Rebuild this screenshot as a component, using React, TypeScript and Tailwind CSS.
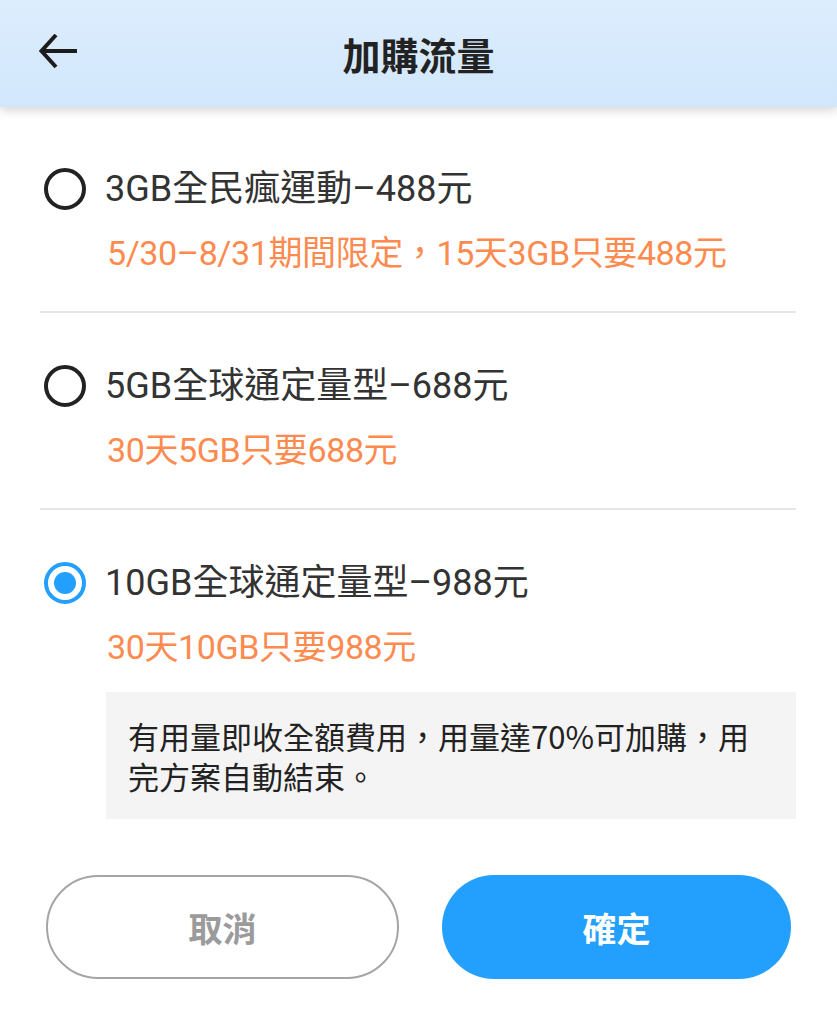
import { useState } from "react";

const plans = [
  { id: "3g", title: "3GB全民瘋運動–488元", desc: "5/30–8/31期間限定，15天3GB只要488元" },
  { id: "5g", title: "5GB全球通定量型–688元", desc: "30天5GB只要688元" },
  { id: "10g", title: "10GB全球通定量型–988元", desc: "30天10GB只要988元" },
];

const latin = "font-['Roboto','Noto_Sans_CJK_TC',sans-serif]";
const cjk = "font-['Noto_Sans_CJK_TC','Noto_Sans',sans-serif]";

function Radio({ checked }: { checked: boolean }) {
  return (
    <span
      className={`w-[42px] h-[42px] rounded-full border-[4px] flex items-center justify-center shrink-0 ${
        checked ? "border-[#239ffe]" : "border-[#222]"
      }`}
    >
      {checked && <span className="w-[22px] h-[22px] rounded-full bg-[#239ffe]" />}
    </span>
  );
}

export default function App() {
  const [selected, setSelected] = useState("10g");

  return (
    <div className={`w-[837px] h-[1024px] bg-white ${cjk}`}>
      {/* Header */}
      <div className="h-[107px] bg-gradient-to-b from-[#dcedfd] to-[#d2e7fc] shadow-[0_3px_10px_rgba(0,0,0,0.18)] grid grid-cols-[1fr_auto_1fr] items-center px-[38px] relative z-10">
        <button className="w-[40px] h-[40px] flex items-center">
          <svg width="40" height="40" viewBox="0 0 40 40" fill="none" stroke="#1c1c1c" strokeWidth="4" strokeLinecap="butt">
            <path d="M39 17 H5" />
            <path d="M18 1 L3.5 17 L18 33" />
          </svg>
        </button>
        <h1 className="text-[38px] font-bold text-[#222] leading-none">加購流量</h1>
        <div />
      </div>

      {/* Plans */}
      <div className="pl-[40px] pr-[41px]">
        {plans.map((p, i) => (
          <div key={p.id}>
            <div
              className={`${i === 0 ? "pt-[60px]" : "pt-[51px]"} ${i === plans.length - 1 ? "pb-[23px]" : "pb-[36px]"} cursor-pointer ${latin}`}
              onClick={() => setSelected(p.id)}
            >
              <div className="flex items-center gap-[19px] pl-[4px]">
                <Radio checked={selected === p.id} />
                <span className="text-[36px] leading-[44px] text-[#333]">{p.title}</span>
              </div>
              <div className="mt-[20px] pl-[67px] text-[34px] leading-[44px] tracking-[-0.4px] text-[#fd8a4e]">{p.desc}</div>
            </div>
            {i < plans.length - 1 && <div className="h-[2px] bg-[#e6e6e6]" />}
          </div>
        ))}
        <div className="ml-[66px] bg-[#f4f4f4] pl-[22px] pr-[30px] pt-[24px] pb-[23px] text-[31px] text-[#222]">
          <div className="h-[40px] leading-[40px]">有用量即收全額費用，用量達70%可加購，用</div>
          <div className="h-[40px] leading-[40px]">完方案自動結束。</div>
        </div>
      </div>

      {/* Buttons */}
      <div className="mt-[56px] px-[46px] flex gap-[43px]">
        <button className="flex-1 h-[104px] rounded-full border-[2px] border-[#a5a5a5] bg-white text-[34px] font-bold text-[#9b9b9b]">
          取消
        </button>
        <button className="flex-1 h-[104px] rounded-full bg-[#239ffe] text-[34px] font-bold text-white">
          確定
        </button>
      </div>
    </div>
  );
}
